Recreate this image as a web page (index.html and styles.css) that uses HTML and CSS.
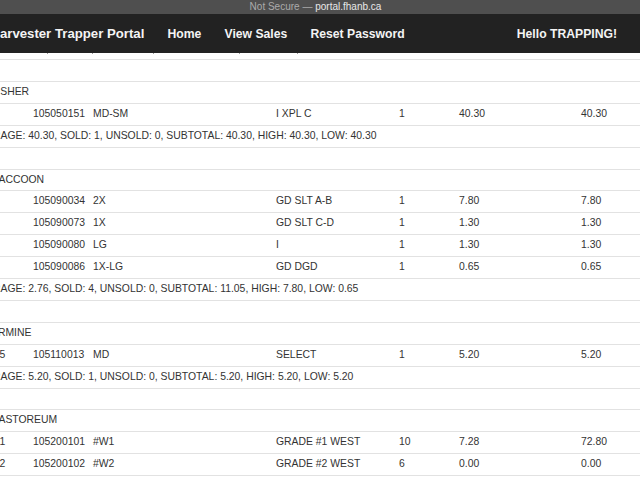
FILE: index.html
```html
<!DOCTYPE html>
<html>
    <head>
        <title>Harvester Trapper Portal</title>
        <link rel="stylesheet" href="styles.css">
    </head>
    <body>
        <!-- browser address strip -->
        <div class="topbar"><span class="dim">Not Secure &mdash; </span>portal.fhanb.ca</div>

        <!-- main navigation -->
        <div class="navbar">
            <span class="brand">Harvester Trapper Portal</span>
            <a class="nav-link" href="#">Home</a>
            <a class="nav-link" href="#">View Sales</a>
            <a class="nav-link" href="#">Reset Password</a>
            <span class="greeting">Hello TRAPPING!</span>
        </div>

        <!-- bottom edge of the header table hidden under the navbar -->
        <div class="ticks">
            <span class="t1"></span><span class="t2"></span><span class="t3"></span><span class="t4"></span><span class="t5"></span>
        </div>

        <table class="sales">
            <colgroup>
                <col class="c1"><col class="c2"><col class="c3"><col class="c4"><col class="c5"><col class="c6"><col class="c7">
            </colgroup>
            <tr class="spacer"><td colspan="7"></td></tr>

            <tr class="species"><td colspan="7">FISHER</td></tr>
            <tr class="item"><td>10004</td><td>105050151</td><td>MD-SM</td><td>I XPL C</td><td>1</td><td>40.30</td><td>40.30</td></tr>
            <tr class="summary"><td colspan="7">AVERAGE: 40.30, SOLD: 1, UNSOLD: 0, SUBTOTAL: 40.30, HIGH: 40.30, LOW: 40.30</td></tr>
            <tr class="spacer"><td colspan="7"></td></tr>

            <tr class="species"><td colspan="7">RACCOON</td></tr>
            <tr class="item"><td>10007</td><td>105090034</td><td>2X</td><td>GD SLT A-B</td><td>1</td><td>7.80</td><td>7.80</td></tr>
            <tr class="item"><td>10007</td><td>105090073</td><td>1X</td><td>GD SLT C-D</td><td>1</td><td>1.30</td><td>1.30</td></tr>
            <tr class="item"><td>10002</td><td>105090080</td><td>LG</td><td>I</td><td>1</td><td>1.30</td><td>1.30</td></tr>
            <tr class="item"><td>10009</td><td>105090086</td><td>1X-LG</td><td>GD DGD</td><td>1</td><td>0.65</td><td>0.65</td></tr>
            <tr class="summary"><td colspan="7">AVERAGE: 2.76, SOLD: 4, UNSOLD: 0, SUBTOTAL: 11.05, HIGH: 7.80, LOW: 0.65</td></tr>
            <tr class="spacer"><td colspan="7"></td></tr>

            <tr class="species"><td colspan="7">ERMINE</td></tr>
            <tr class="item"><td>100015</td><td>105110013</td><td>MD</td><td>SELECT</td><td>1</td><td>5.20</td><td>5.20</td></tr>
            <tr class="summary"><td colspan="7">AVERAGE: 5.20, SOLD: 1, UNSOLD: 0, SUBTOTAL: 5.20, HIGH: 5.20, LOW: 5.20</td></tr>
            <tr class="spacer"><td colspan="7"></td></tr>

            <tr class="species"><td colspan="7">CASTOREUM</td></tr>
            <tr class="item"><td>100021</td><td>105200101</td><td>#W1</td><td>GRADE #1 WEST</td><td>10</td><td>7.28</td><td>72.80</td></tr>
            <tr class="item"><td>100022</td><td>105200102</td><td>#W2</td><td>GRADE #2 WEST</td><td>6</td><td>0.00</td><td>0.00</td></tr>
        </table>
    </body>
</html>
```

FILE: styles.css
```css
body {
    margin: 0;
    overflow: hidden;
    background: #fff;
    font-family: "Liberation Sans", Arial, sans-serif;
}

/**Browser strip**/
.topbar {
    height: 14px;
    line-height: 14px;
    background: #4f4f4f;
    color: #e8e8e8;
    font-size: 10px;
    text-align: center;
    padding-right: 9px;
}

.dim {
    color: #ababab;
}

/**Navbar**/
.navbar {
    height: 39px;
    background: #222;
    display: flex;
    align-items: center;
    font-weight: bold;
    font-size: 12.2px;
    color: #f4f4f4;
}

.brand {
    font-size: 13.2px;
    margin-left: -9.6px; /*the page is scrolled a little to the right*/
    margin-right: 11.5px;
    white-space: nowrap;
}

.nav-link {
    color: #f4f4f4;
    text-decoration: none;
    padding: 0 11.6px;
    white-space: nowrap;
}

.greeting {
    margin-left: auto;
    margin-right: 23px;
}

/**Column ticks peeking under the navbar**/
.ticks {
    display: flex;
    height: 1px;
    margin-bottom: 5px;
}

.ticks span {
    border-right: 1px solid #9a9a9a;
}

.t1 { width: 47px; }
.t2 { width: 44px; }
.t3 { width: 60px; }
.t4 { width: 85px; }
.t5 { width: 57px; }

/**Sales table**/
.sales {
    margin-left: -32px;
    width: 740px;
    table-layout: fixed;
    border-collapse: collapse;
    border-bottom: 1px solid #e2e2e2;
    font-size: 10.4px;
    color: #333;
}

.c1 { width: 60px; }
.c2 { width: 60px; }
.c3 { width: 183px; }
.c4 { width: 123px; }
.c5 { width: 60px; }
.c6 { width: 122px; }
.c7 { width: 132px; }

.sales td {
    border-top: 1px solid #e2e2e2;
    padding: 0 5px;
    height: 20.9px;
    line-height: 20.9px;
    white-space: nowrap;
    overflow: hidden;
}

.item td:first-child {
    text-indent: -2.5px;
}

.species td {
    padding-left: 23px;
}
```
